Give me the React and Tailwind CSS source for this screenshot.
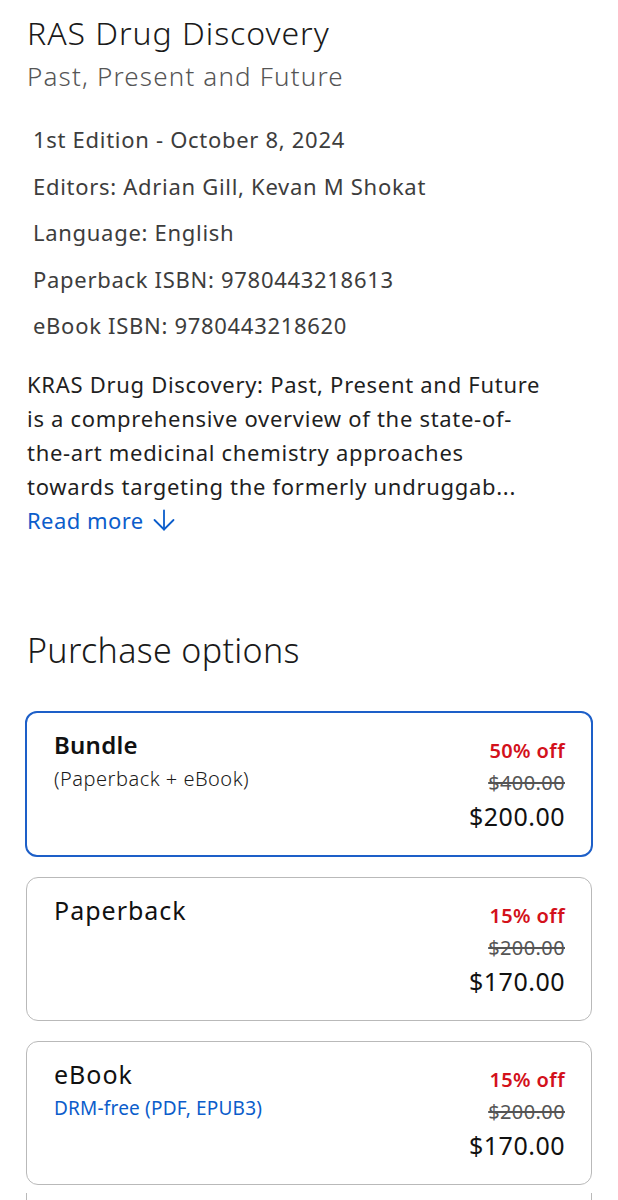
const font = { fontFamily: '"Noto Sans", "Open Sans", sans-serif' };

const info = [
  '1st Edition - October 8, 2024',
  'Editors: Adrian Gill, Kevan M Shokat',
  'Language: English',
  'Paperback ISBN: 9780443218613',
  'eBook ISBN: 9780443218620',
];

function Option({ title, bold, sub, subBlue, off, was, now, selected }) {
  return (
    <div
      className={`flex justify-between rounded-[12px] pl-[27px] pr-[26px] ${
        selected ? 'border-2 border-[#1d5fc8] h-[146px]' : 'border border-[#b9b9b9] h-[144px] mx-px'
      }`}
    >
      <div className="flex flex-col pt-[15px]">
        <div
          className={`leading-[34px] text-[#111] ${
            bold ? 'font-semibold text-[24px] tracking-[0.01em]' : 'text-[25px] tracking-[0.04em]'
          }`}
        >
          {title}
        </div>
        {sub && (
          <div
            className={`mt-[2px] text-[19px] leading-[30px] ${
              subBlue ? 'text-[#0b5dcb] tracking-[0.01em]' : 'text-[#1a1a1a] font-light text-[20px] tracking-[0.025em]'
            }`}
          >
            {sub}
          </div>
        )}
      </div>
      <div className="flex flex-col items-end pt-[22px]">
        <div className="text-[20px] leading-[32px] font-semibold text-[#d3111b] tracking-[0.02em]">{off}</div>
        <div className="text-[20px] leading-[32px] text-[#555] line-through tracking-[0.02em]">{was}</div>
        <div className="text-[25px] leading-[34px] text-[#111] tracking-[0.02em]">{now}</div>
      </div>
    </div>
  );
}

export default function App() {
  return (
    <div className="w-[618px] h-[1200px] overflow-hidden bg-white px-[25px]" style={font}>
      <h1 className="mt-[13px] pl-[2px] text-[32px] leading-[40px] font-light tracking-[0.03em] text-[#1a1a1a]">
        RAS Drug Discovery
      </h1>
      <div className="mt-[3px] pl-[2px] text-[26px] leading-[40px] font-light tracking-[0.045em] text-[#555]">
        Past, Present and Future
      </div>

      <div className="mt-[20px] pl-[8px] flex flex-col">
        {info.map((line) => (
          <div key={line} className="text-[22px] leading-[46.5px] tracking-[0.032em] text-[#3d3d3d]">
            {line}
          </div>
        ))}
      </div>

      <p className="mt-[18px] pl-[2px] text-[22px] leading-[34px] tracking-[0.032em] text-[#1f1f1f] whitespace-nowrap">
        KRAS Drug Discovery: Past, Present and Future
        <br />
        is a comprehensive overview of the state-of-
        <br />
        the-art medicinal chemistry approaches
        <br />
        towards targeting the formerly undruggab...
      </p>
      <a className="pl-[2px] flex items-center gap-[8px] text-[22px] leading-[34px] tracking-[0.02em] text-[#0b5dcb]">
        Read more
        <svg width="24" height="24" viewBox="0 0 24 24" fill="none" stroke="currentColor" strokeWidth="1.8" strokeLinecap="round" strokeLinejoin="round">
          <path d="M12 2.5v19" />
          <path d="M2.5 12l9.5 9.5 9.5-9.5" />
        </svg>
      </a>

      <h2 className="mt-[91px] pl-[2px] text-[34px] leading-[44px] font-light tracking-[0.01em] text-[#1a1a1a]">
        Purchase options
      </h2>

      <div className="mt-[39px] flex flex-col gap-[20px]">
        <Option title="Bundle" bold sub="(Paperback + eBook)" off="50% off" was="$400.00" now="$200.00" selected />
        <Option title="Paperback" off="15% off" was="$200.00" now="$170.00" />
        <Option title="eBook" sub="DRM-free (PDF, EPUB3)" subBlue off="15% off" was="$200.00" now="$170.00" />
      </div>
      <div className="mt-[8px] mx-px h-[20px] border-x border-[#b9b9b9]" />
    </div>
  );
}
